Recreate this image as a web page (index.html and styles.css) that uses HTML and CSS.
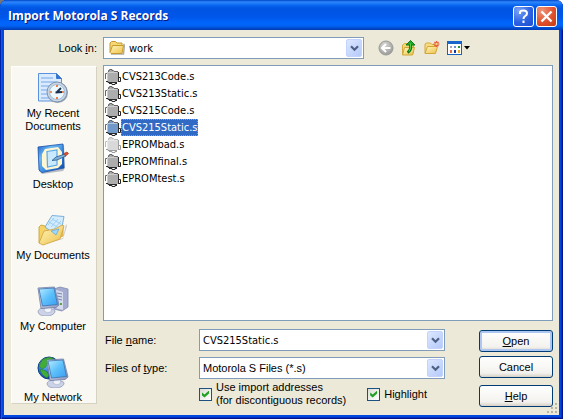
FILE: index.html
```html
<!DOCTYPE html>
<html lang="en">
<head>
<meta charset="utf-8">
<title>Import Motorola S Records</title>
<link rel="stylesheet" href="styles.css">
</head>
<body>
<svg class="defs" aria-hidden="true">
  <defs>
    <linearGradient id="gold" x1="0" y1="0" x2="1" y2="1"><stop offset="0" stop-color="#fff6bc"/><stop offset="1" stop-color="#edc04b"/></linearGradient>
    <linearGradient id="screen" x1="0" y1="0" x2="1" y2="1"><stop offset="0" stop-color="#b9ecff"/><stop offset=".5" stop-color="#5cc0fb"/><stop offset="1" stop-color="#3a9df2"/></linearGradient>
    <linearGradient id="steel" x1="0" y1="0" x2="1" y2="1"><stop offset="0" stop-color="#eef1fa"/><stop offset="1" stop-color="#8b97bc"/></linearGradient>
    <linearGradient id="desk" x1="0" y1="0" x2="1" y2="1"><stop offset="0" stop-color="#1b62c8"/><stop offset=".3" stop-color="#6db8f5"/><stop offset=".7" stop-color="#2b7bdb"/><stop offset="1" stop-color="#0d3f9c"/></linearGradient>
    <radialGradient id="ocean" cx=".35" cy=".3" r=".8"><stop offset="0" stop-color="#8fd2ff"/><stop offset=".5" stop-color="#2676dc"/><stop offset="1" stop-color="#082f86"/></radialGradient>
    <radialGradient id="greyball" cx=".4" cy=".3" r=".7"><stop offset="0" stop-color="#d8d8d4"/><stop offset="1" stop-color="#9c9c9a"/></radialGradient>
    <symbol id="chip" viewBox="0 0 16 16">
      <path d="M2 3h2V1h4v2h5v10h-2v1H4v-1H2z" fill="currentColor"/>
      <path d="M.5 10V4.500H2M3.500 3V1.500h1v-1H7v1h1.500v1M9 2.500h4" fill="none" stroke="#666"/>
      <path d="M2.500 12V3.500H12" fill="none" stroke="#e2e2e2" opacity=".6"/>
      <path d="M13.500 3v10M1 12.500h2v1h9M4 14.500h3v1h3v-1h2" fill="none" stroke="#2b2b2b"/>
      <path d="M14 8.500h1.500v4H14" fill="none" stroke="#222"/>
    </symbol>
    <symbol id="monitor" viewBox="0 0 23 30">
      <path d="M1 26q0-4 7-4l7 1q4 1 3 3-2 4-9 4t-8-4z" fill="#cdd3e6" stroke="#8893b5" stroke-width=".7"/>
      <path d="M8 20l7 1-1 5q-4 2-7-1z" fill="#f0f2fa" stroke="#a3adca" stroke-width=".6"/>
      <path d="M1 2L17.500 1l4.500 18-3 2.500L4 22.500z" fill="url(#steel)" stroke="#6f7ba3" stroke-width=".8"/>
      <path d="M2 3l15-1 3.500 16.500L5.500 20z" fill="url(#screen)" stroke="#3b70ac" stroke-width=".8"/>
    </symbol>
    <symbol id="chevron" viewBox="0 0 9 7"><path d="M1 1.200l3.500 3.500L8 1.200" fill="none" stroke="#4d6185" stroke-width="2.200"/></symbol>
  </defs>
</svg>

<main class="dialog">
  <header class="titlebar">
    <h1>Import Motorola S Records</h1>
    <button class="caption-btn" type="button" aria-label="Help">
      <svg width="21" height="21" viewBox="0 0 21 21"><path d="M7 8V6.500Q7 4.500 10.500 4.500T14 7.500Q14 9 12.200 10Q10.500 11 10.500 13M10.500 14.500v2.500" fill="none" stroke="#fff" stroke-width="2"/></svg>
    </button>
    <button class="caption-btn close" type="button" aria-label="Close">
      <svg width="21" height="21" viewBox="0 0 21 21"><path d="M5.500 5.500l10 10M15.500 5.500l-10 10" stroke="#fff" stroke-width="2.400"/></svg>
    </button>
  </header>

  <form class="body">
    <div class="lookbar">
      <label for="look">Look <u>i</u>n:</label>
      <div class="combo with-icon">
        <svg class="folder" width="16" height="14" viewBox="0 0 16 14"><path d="M2 13h12.500l1-9-1-1" fill="none" stroke="#777" stroke-width="1.500" opacity=".6"/><path d="M1 11V2l1.500-1.500h4L8 2h5v3" fill="#f5d874" stroke="#c39b2e"/><path d="M1 11.500L3.500 4.500H14.500L13 12.500H2z" fill="url(#gold)" stroke="#c69b2c"/></svg>
        <select id="look"><option>work</option></select>
        <span class="arrow"><svg width="9" height="7"><use href="#chevron"/></svg></span>
      </div>
      <nav class="tools" aria-label="Folder tools">
        <button type="button" aria-label="Back"><svg width="16" height="16" viewBox="0 0 16 16"><circle cx="8" cy="8" r="7" fill="url(#greyball)" stroke="#999"/><path d="M12.500 8H4.500M8 4L4 8l4 4" fill="none" stroke="#fff" stroke-width="2"/></svg></button>
        <button type="button" aria-label="Up one level"><svg width="16" height="16" viewBox="0 0 16 16"><path d="M1.500 14V5l2-1.500h3L8 5h4.500v8z" fill="#f5d774" stroke="#d3ab41"/><path d="M1.500 15l2-7.500h10L11.500 15z" fill="url(#gold)" stroke="#d1a638"/><path d="M6.500 12.500q4-2 3-8" fill="none" stroke="#087b15" stroke-width="3"/><path d="M5 5L9.500.5 14 5z" fill="#24a82c" stroke="#087b15"/><path d="M8 11.500q2.500-3 1.500-8" fill="none" stroke="#4bd44b"/></svg></button>
        <button type="button" aria-label="Create new folder"><svg width="16" height="16" viewBox="0 0 16 16"><path d="M1 13V4l1.500-1h4L8 4.500h4V7" fill="#f7db80" stroke="#d3ab41"/><path d="M1 13.500L3.500 6.500H13.500L11.500 13.500z" fill="url(#gold)" stroke="#d3a63a"/><path d="M12.500 1v6M9.500 4h6M10.500 2l4 4M14.500 2l-4 4" stroke="#e75532" stroke-width="1.200"/><circle cx="12.500" cy="4" r="1.200" fill="#ffd183"/></svg></button>
        <button type="button" aria-label="View menu"><svg width="23" height="16" viewBox="0 0 23 16"><rect x=".5" y="1.500" width="14" height="13" fill="#fff" stroke="#1664be"/><path d="M0 1h15v3H0z" fill="#1766cc"/><path d="M3 6h2v2H3z" fill="#a6a6b8"/><path d="M7 6h2v2H7z" fill="#6b8fd3"/><path d="M11 6h2v2h-2z" fill="#27963a"/><path d="M3 10h2v3H3z" fill="#eb6848"/><path d="M7 10h2v3H7z" fill="#163b9f"/><path d="M11 10h2v3h-2z" fill="#efac2f"/><path d="M17 6h6l-3 3.500z" fill="#000"/></svg></button>
      </nav>
    </div>

    <nav class="places" aria-label="Places">
      <a href="#recent">
        <svg width="32" height="32" viewBox="0 0 32 32"><path d="M1.500 1.500h18l5 5V29h-23z" fill="#dbeafd" stroke="#5a92df"/><path d="M19.500 1.500v5h5z" fill="#2f76d8" stroke="#3b78ce"/><path d="M4 6h12M4 10h16M4 14h8M4 18h6M4 22h6M4 26h8" stroke="#94bdf1" stroke-width="1.600"/><circle cx="20.500" cy="20.500" r="10.500" fill="#95a2b2"/><circle cx="20" cy="20" r="10" fill="#c7d4e3" stroke="#8496ab"/><circle cx="20" cy="20" r="7.500" fill="#eef9ff" stroke="#9dbfdd"/><path d="M20 13v2M20 25v2M13 20h2M25 20h2" stroke="#f06b28" stroke-width="1.700"/><path d="M18.500 20.500L25 20M19.500 20.500L24 16" stroke="#183251" stroke-width="1.800"/></svg>
        <span>My Recent Documents</span></a>
      <a href="#desktop">
        <svg width="32" height="32" viewBox="0 0 32 32"><path d="M2 5L27 2l1 23-2 3-21 3-3-3z" fill="#8a93a5" opacity=".6"/><path d="M1 4l25-3 1 24-22 4.500L2 27z" fill="url(#desk)" stroke="#164fa8" stroke-width=".8"/><path d="M8 6l13-2 4 5v12l-4 4-12 2-4-4V11z" fill="#fff7d2"/><path d="M10 8.500L20 7v15L10.500 24z" fill="#c9e9ff" stroke="#5ba7e6" stroke-width="1.200"/><path d="M15 17.500l4-3.500 9-3 1 2-9 4z" fill="#7fb0d8" stroke="#2c5a90" stroke-width=".8"/><path d="M27 10.500l3-1.500 1.500 1.500-3 2.500z" fill="#df4c2c" stroke="#b1402a" stroke-width=".8"/></svg>
        <span>Desktop</span></a>
      <a href="#documents">
        <svg width="32" height="32" viewBox="0 0 32 32"><path d="M4 31L26 25l4-13-1-2-3 14-21 7" fill="#888" opacity=".4"/><path d="M2 29V13l2-2 4 1 3 2 15-3v11z" fill="#f6d367" stroke="#c69a31" stroke-width=".8"/><path d="M8 13L15 1.500l12 1L25 13l-6 8z" fill="#d3edff" stroke="#79b0de"/><path d="M11 11l6-7M14 13l7-8M17 15l7-8M12 8l10 6M15 5l9 5" stroke="#9accf2" stroke-width=".9"/><path d="M2 29L7 17l11-2 7-4 2 1-4 13-17 6z" fill="url(#gold)" stroke="#cfa03a" stroke-width=".8"/><path d="M14 17l8-2-3 6z" fill="#9dd8ff" stroke="#5aa4db" stroke-width=".7"/></svg>
        <span>My Documents</span></a>
      <a href="#computer">
        <svg width="32" height="32" viewBox="0 0 32 32"><path d="M17 4l6-2 8 2v18l-6 4-8-2z" fill="#a3abd0" stroke="#8089b0" stroke-width=".8"/><path d="M17.500 4.500L26 7v18l-8-2z" fill="#d5daec"/><path d="M20 8l5 1M20 11l5 1M21 14l4 1" stroke="#7886ae"/><path d="M23 18h2v2h-2z" fill="#50a846"/><use href="#monitor" x="0" y="1" width="23" height="30"/></svg>
        <span>My Computer</span></a>
      <a href="#network">
        <svg width="32" height="32" viewBox="0 0 32 32"><circle cx="12" cy="12" r="11" fill="url(#ocean)" stroke="#123f8e"/><path d="M5 4q6-4 11-2l-2 4-4 1-1 4-4 2-3-3zM3 13l6 2 3 4-2 3q-6-3-7-9zM17 3q5 3 5 8l-5-2z" fill="#43ac38" stroke="#257b25" stroke-width=".5"/><use href="#monitor" x="9" y="2" width="23" height="30"/></svg>
        <span>My Network</span></a>
    </nav>

    <ul class="files" role="listbox" aria-label="Files">
      <li role="option"><svg><use href="#chip"/></svg><span>CVS213Code.s</span></li>
      <li role="option"><svg><use href="#chip"/></svg><span>CVS213Static.s</span></li>
      <li role="option"><svg><use href="#chip"/></svg><span>CVS215Code.s</span></li>
      <li role="option" class="selected" aria-selected="true"><svg><use href="#chip"/></svg><span>CVS215Static.s</span></li>
      <li role="option" class="hidden-file"><svg><use href="#chip"/></svg><span>EPROMbad.s</span></li>
      <li role="option"><svg><use href="#chip"/></svg><span>EPROMfinal.s</span></li>
      <li role="option"><svg><use href="#chip"/></svg><span>EPROMtest.s</span></li>
    </ul>

    <div class="bottom">
      <div class="fields">
        <label for="name">File <u>n</u>ame:</label>
        <div class="combo filename">
          <input id="name" type="text" value="CVS215Static.s">
          <button class="arrow" type="button" aria-label="Recent names"><svg width="9" height="7"><use href="#chevron"/></svg></button>
        </div>
        <label for="type">Files of <u>t</u>ype:</label>
        <div class="combo">
          <select id="type"><option>Motorola S Files (*.s)</option></select>
          <span class="arrow"><svg width="9" height="7"><use href="#chevron"/></svg></span>
        </div>
        <div class="checks">
          <label><input type="checkbox" checked><span>Use import addresses<br>(for discontiguous records)</span></label>
          <label><input type="checkbox" checked><span>Highlight</span></label>
        </div>
      </div>
      <div class="actions">
        <button class="push default" type="submit"><span><u>O</u>pen</span></button>
        <button class="push" type="button">Cancel</button>
        <button class="push help" type="button"><span><u>H</u>elp</span></button>
      </div>
    </div>
  </form>
  <svg class="grip" width="12" height="12" viewBox="0 0 12 12" aria-hidden="true"><path d="M9 1h2v2H9zM5 5h2v2H5zM9 5h2v2H9zM1 9h2v2H1zM5 9h2v2H5zM9 9h2v2H9z" fill="#b8b4a3"/></svg>
</main>
</body>
</html>
```
FILE: styles.css
```css
* { box-sizing: border-box; }

body {
  margin: 0;
  background: linear-gradient(90deg, #777 50%, #fff 50%);
  color: #000;
  font: 11px/13px "Liberation Sans", Arial, sans-serif;
}

button, input, select { font: inherit; color: inherit; }
.defs { position: absolute; width: 0; height: 0; }

.dialog {
  position: relative;
  display: flex;
  flex-direction: column;
  min-height: 100vh;
  background: #0048e0;
  border-radius: 7px 7px 0 0;
  padding: 0 4px 4px;
  box-shadow: inset 1px 0 #0022a8, inset 2px 0 #0a5cf0, inset -1px -1px #00138c, inset -2px -2px #0030c0;
}

.titlebar {
  display: flex;
  align-items: center;
  gap: 2px;
  height: 30px;
  margin: 0 -4px;
  padding: 2px 6px 0 8px;
  border-radius: 7px 7px 0 0;
  background: linear-gradient(#0046c8 0, #2f86fb 2px, #1674f6 4px, #0460ea 6px, #0054e3 9px, #0056ea 17px, #0066fc 23px, #0062f4 26px, #004cd0 28px, #003cb4 30px);
}

.titlebar h1 {
  flex: 1;
  margin: 0;
  color: #fff;
  font: bold 12px/20px "Open Sans", sans-serif;
  text-shadow: 1px 1px #0a1883;
}

.caption-btn {
  width: 21px;
  height: 21px;
  padding: 0;
  border: 1px solid #fff;
  border-radius: 3px;
  background: radial-gradient(circle at 25% 20%, #7ba3f5, #2d62e2 55%, #1b4ed0);
}
.caption-btn svg { display: block; margin: -1px; }
.caption-btn.close { background: radial-gradient(circle at 25% 20%, #f0957a, #e0512d 55%, #c63a12); }

.body {
  flex: 1;
  display: grid;
  grid-template-columns: 86px 1fr;
  grid-template-rows: 28px 256px auto;
  column-gap: 6px;
  padding: 7px 6px 8px 7px;
  background: #ece9d8;
}

.lookbar {
  grid-column: 1 / -1;
  display: grid;
  grid-template-columns: 86px 261fr 183fr;
  column-gap: 6px;
  align-items: start;
}
.lookbar > label { text-align: right; line-height: 22px; }

.combo {
  position: relative;
  display: flex;
  height: 22px;
  border: 1px solid #7f9db9;
  background: #fff;
}
.combo select, .combo input {
  appearance: none;
  flex: 1;
  min-width: 0;
  padding: 0 20px 0 3px;
  border: 0;
  border-radius: 0;
  outline: 0;
  background: transparent;
}
.combo.filename, .combo.with-icon, .files { font-family: "DejaVu Sans Condensed", "DejaVu Sans", sans-serif; }
.combo.with-icon select { padding-left: 25px; }
.folder { position: absolute; left: 5px; top: 3px; }

.arrow {
  position: absolute;
  top: 1px;
  right: 1px;
  bottom: 1px;
  width: 16px;
  padding: 0;
  display: grid;
  place-items: center;
  border: 1px solid #c3d3fd;
  border-radius: 2px;
  background: linear-gradient(135deg, #dce7ff, #b5cafa);
  pointer-events: none;
}
button.arrow { pointer-events: auto; }

.tools { display: flex; gap: 7px; padding: 3px 0 0 8px; }
.tools button { padding: 0; border: 0; background: none; }
.tools svg { display: block; }

.places {
  grid-row: 2 / 4;
  grid-column: 1;
  height: 338px;
  margin-top: 1px;
  padding-top: 5px;
  overflow: hidden;
  border: 1px solid #fff;
  border-right-color: #d5d2c2;
  border-bottom-color: #d5d2c2;
  background: #f9f8f3;
}
.places a {
  display: flex;
  flex-direction: column;
  align-items: center;
  gap: 3px;
  height: 71px;
  padding: 0 10px 0 8px;
  color: inherit;
  text-align: center;
  text-decoration: none;
}
.places a svg { flex: none; }
.places a span { width: min-content; }
.places a:not(:first-child) span { width: auto; white-space: nowrap; }

.files {
  margin: 0;
  padding: 2px 1px;
  border: 1px solid #7f9db9;
  background: #fff;
  list-style: none;
}
.files li { display: flex; align-items: center; height: 17px; }
.files svg { width: 16px; height: 16px; color: #adadad; }
.files span { padding: 1px; line-height: 15px; }
.files .selected span {
  background: #316ac5;
  color: #fff;
  outline: 1px dotted #ce953a;
  outline-offset: -1px;
}
.files .selected svg { color: #7098c8; }
.files .hidden-file svg { opacity: .45; }

.bottom {
  grid-column: 2;
  display: flex;
  gap: 34px;
  padding-top: 8px;
}
.fields {
  flex: 1;
  display: grid;
  grid-template-columns: 96px 1fr;
  grid-auto-rows: min-content;
  row-gap: 6px;
}
.fields > label { padding-left: 2px; line-height: 22px; }

.checks {
  grid-column: 2;
  display: flex;
  justify-content: space-between;
  margin-right: -14px;
  margin-top: -4px;
}
.checks label { display: flex; align-items: center; gap: 4px; white-space: nowrap; }
.checks label + label { margin-right: 32px; }
.checks input {
  appearance: none;
  flex: none;
  display: grid;
  place-items: center;
  width: 13px;
  height: 13px;
  margin: 0;
  border: 1px solid #1c5180;
  background: linear-gradient(135deg, #dcdcd7, #fff);
}
.checks input:checked::before {
  content: "";
  width: 7px;
  height: 7px;
  background: #21a121;
  clip-path: polygon(0 28%, 36% 58%, 100% 0, 100% 42%, 36% 100%, 0 72%);
}

.actions { width: 74px; display: grid; align-content: start; gap: 4px; padding-top: 1px; }
.push {
  height: 22px;
  padding: 0;
  border: 1px solid #003c74;
  border-radius: 3px;
  background: linear-gradient(#fff, #f3f2ee 80%, #d6d0c5);
}
.push.default { box-shadow: inset 0 0 0 2px #adc6f2; }
.push.help { margin-top: 3px; }

.grip { position: absolute; right: 5px; bottom: 5px; }
```
